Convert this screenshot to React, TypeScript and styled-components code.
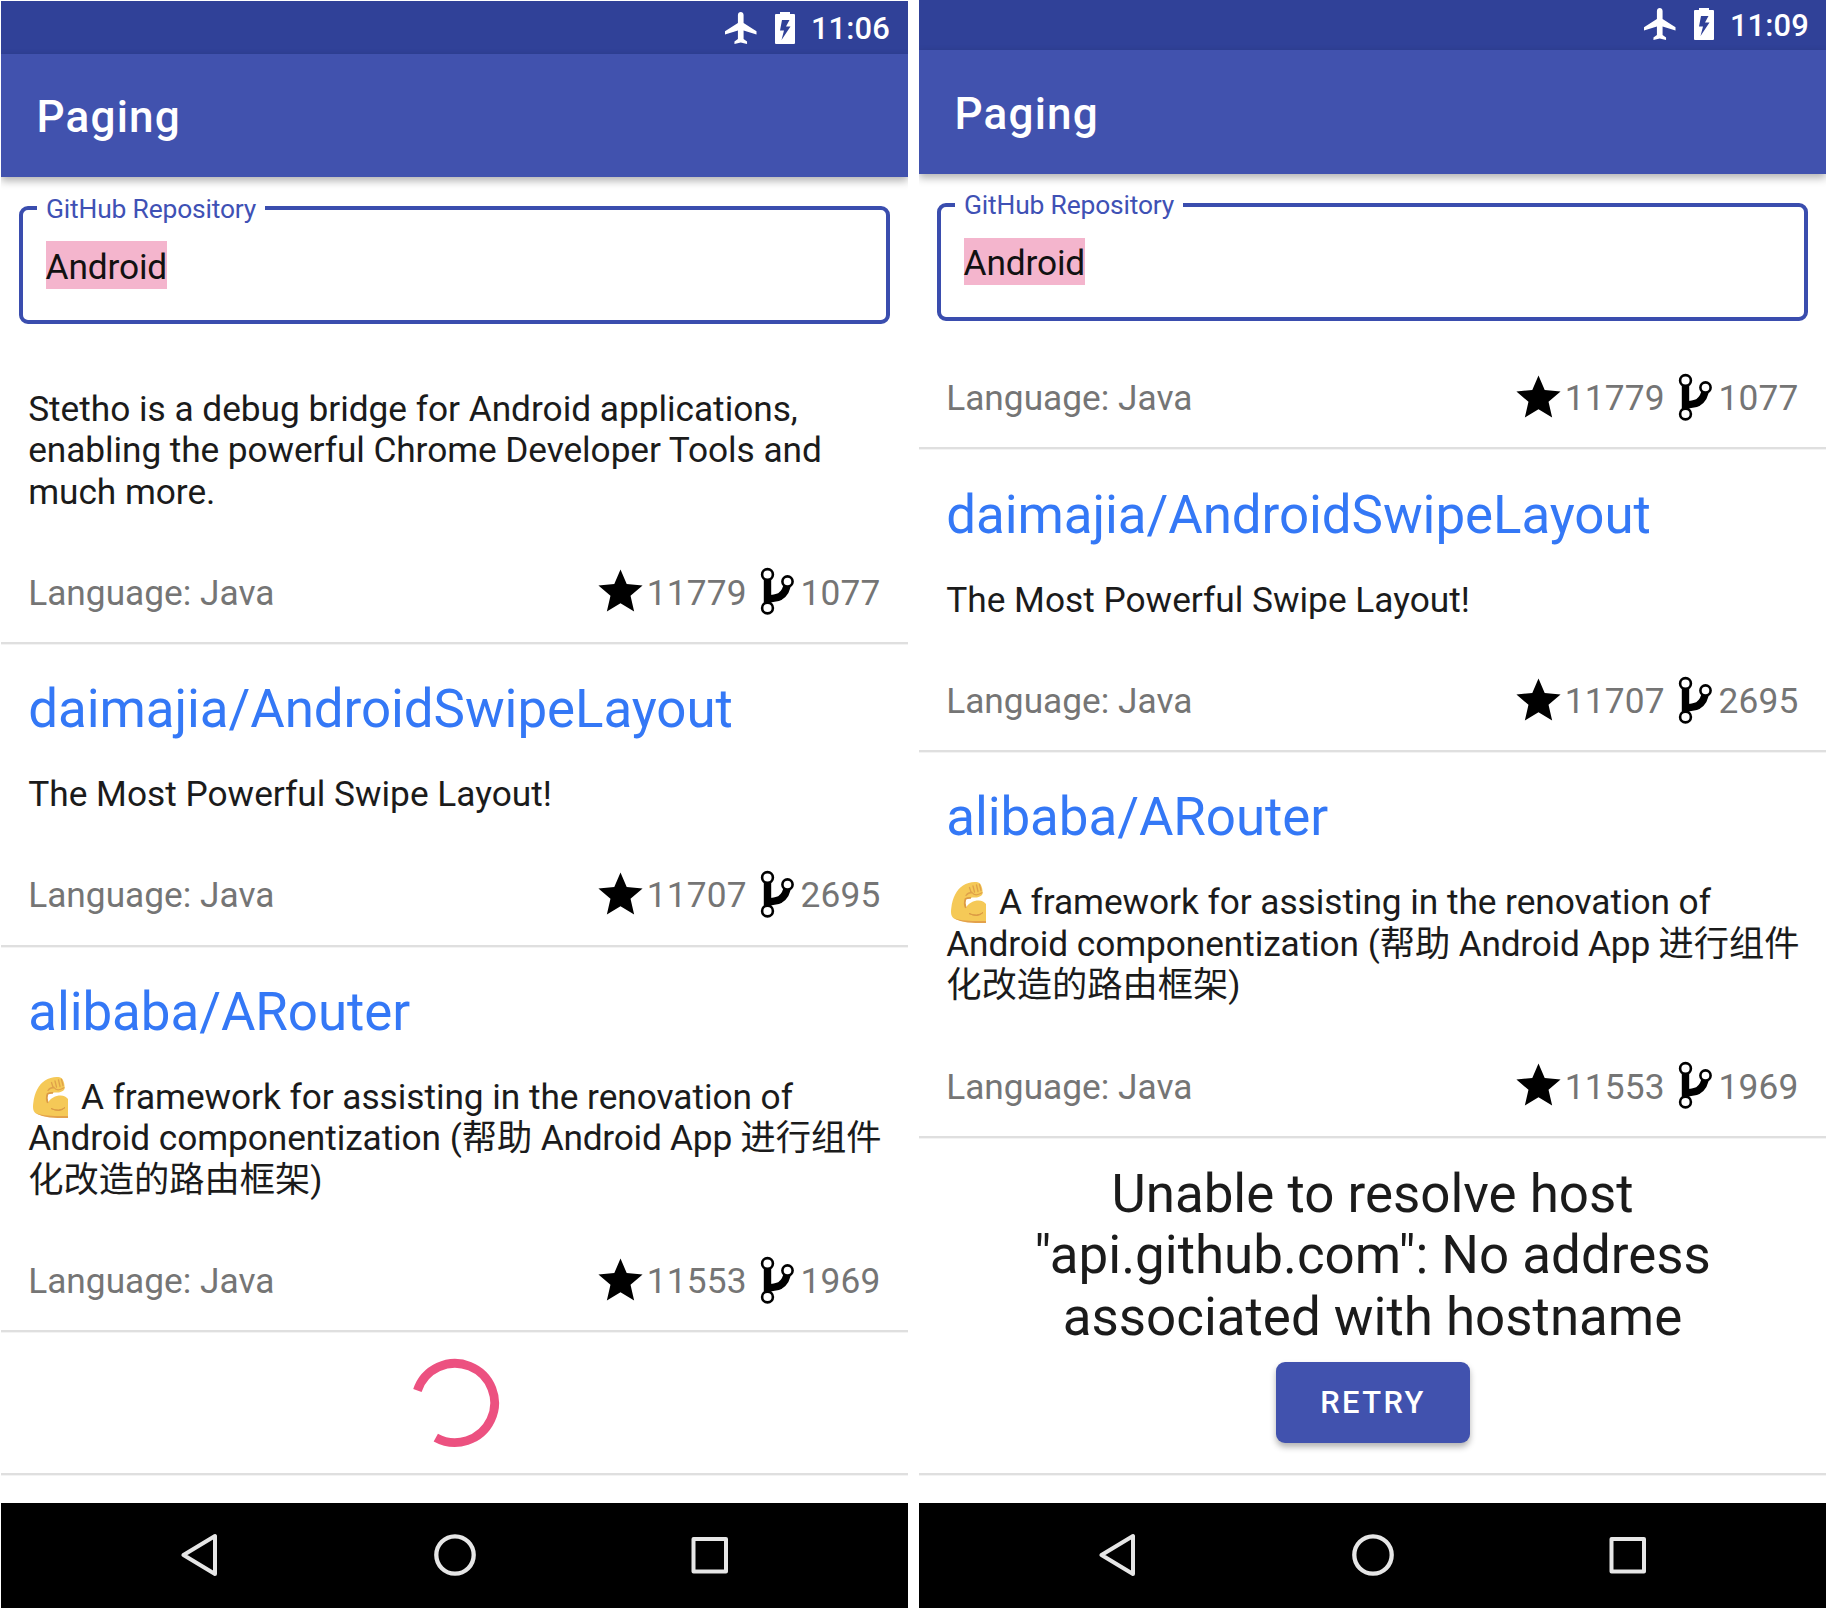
import React from "react";
import styled, { createGlobalStyle } from "styled-components";

const GlobalStyle = createGlobalStyle`
  *, *::before, *::after { box-sizing: border-box; }
  body {
    margin: 0;
    background: #fff;
    font-family: Roboto, "Noto Sans CJK SC", sans-serif;
    color: #1b1b1b;
  }
`;

const Stage = styled.main`
  display: flex;
  justify-content: space-between;
  align-items: flex-end;
  width: 1826px;
  height: 1608px;
  padding-left: 1px;
  overflow: hidden;
`;

const Phone = styled.section<{ $height: number }>`
  display: flex;
  flex-direction: column;
  width: 907px;
  height: ${(p) => p.$height}px;
  overflow: hidden;
  background: #fff;
`;

const StatusBar = styled.div<{ $height: number }>`
  flex: none;
  display: flex;
  align-items: center;
  justify-content: flex-end;
  height: ${(p) => p.$height}px;
  padding: ${(p) => (p.$height > 51 ? "1px 18px 0 0" : "0 17px 2px 0")};
  background: #304198;
  color: #fff;
`;

const Clock = styled.time`
  margin-left: 16px;
  padding-top: 3px;
  font-size: 30.9px;
  font-weight: 500;
  line-height: 36px;
  letter-spacing: 0.15px;
`;

const BatteryIcon = styled.svg`
  width: 20px;
  height: 32px;
  margin-left: 18px;
`;

const PlaneIcon = styled.svg`
  width: 31.5px;
  height: 32px;
`;

const AppBar = styled.header`
  flex: none;
  display: flex;
  align-items: center;
  height: 123.5px;
  padding: 4px 35px 0 35.4px;
  background: #4152ae;
  box-shadow: 0 4px 8px rgba(0, 0, 0, 0.3);
  z-index: 1;
`;

const AppTitle = styled.h1`
  margin: 0;
  color: #fff;
  font-size: 44.1px;
  font-weight: 500;
  line-height: 52px;
  letter-spacing: 1.2px;
`;

const SearchField = styled.fieldset`
  flex: none;
  height: 132.5px;
  margin: 14.5px 18px 0;
  padding: 0 0 0 14px;
  border: 4px solid #3a4dae;
  border-radius: 9px;
`;

const FieldLabel = styled.legend`
  padding: 2px 9px 0;
  color: #3f51b5;
  font-size: 26.4px;
  line-height: 31px;
  letter-spacing: -0.17px;
`;

const Selection = styled.span`
  display: block;
  width: max-content;
  height: 47.5px;
  margin: 16.5px 0 0 8.5px;
  padding-top: 3.5px;
  background: #f4b5cd;
  color: #111;
  font-size: 35.3px;
  line-height: 44px;
  letter-spacing: -0.15px;
`;

const List = styled.div`
  flex: 1;
  min-height: 0;
  display: flex;
  flex-direction: column;
  justify-content: flex-end;
  padding-bottom: 28px;
  overflow: hidden;
`;

const Item = styled.article`
  flex: none;
  padding: 34.4px 27.5px 27.8px 27.2px;
  border-bottom: 2.2px solid #dfdfdf;
  box-shadow: 0 1px 0 #f3f3f3;
`;

const RepoName = styled.h2`
  margin: 0 0 34px;
  color: #3478f6;
  font-size: 52.9px;
  font-weight: 400;
  line-height: 62px;
  letter-spacing: -0.07px;
`;

const Description = styled.p`
  margin: 0 0 59.6px;
  font-size: 35.28px;
  line-height: 41.5px;
  white-space: pre;
`;

const Tracked = styled.span<{ $tracking: number }>`
  letter-spacing: ${(p) => p.$tracking}px;
`;

const MetaRow = styled.div`
  display: flex;
  align-items: center;
  height: 41.4px;
  color: #757575;
  font-size: 35.28px;
  line-height: 41.4px;
`;

const Language = styled.span`
  flex: 1;
`;

const Count = styled.span`
  letter-spacing: 0.15px;
`;

const StarIcon = styled.svg`
  width: 53px;
  height: 53px;
  margin: -9px -0.5px -6px 0;
`;

const ForkIcon = styled.svg`
  width: 55px;
  height: 53px;
  margin: -9px -0.5px -6px -0.5px;
`;

const ArmIcon = styled.svg`
  display: inline-block;
  width: 44px;
  height: 44px;
  margin: -12px 0;
  vertical-align: 2px;
`;

const LoadingRow = styled.div`
  flex: none;
  display: flex;
  align-items: center;
  justify-content: center;
  height: 142.3px;
  padding-top: 1px;
  border-bottom: 2.2px solid #dfdfdf;
  box-shadow: 0 1px 0 #f3f3f3;
`;

const Spinner = styled.svg`
  width: 90px;
  height: 90px;
`;

const ErrorRow = styled.div`
  flex: none;
  display: flex;
  flex-direction: column;
  align-items: center;
  height: 336.8px;
  padding-top: 26px;
  border-bottom: 2.2px solid #dfdfdf;
  box-shadow: 0 1px 0 #f3f3f3;
`;

const ErrorText = styled.p`
  margin: 0;
  font-size: 52.9px;
  line-height: 61.5px;
  text-align: center;
  white-space: pre;
`;

const RetryButton = styled.button`
  width: 194px;
  height: 81px;
  margin-top: 13.6px;
  padding: 2px 0 0 1px;
  border: 0;
  border-radius: 9px;
  background: #4152ae;
  box-shadow: 0 4px 6px rgba(0, 0, 0, 0.3);
  color: #fff;
  font: 500 30.9px/36px Roboto, sans-serif;
  letter-spacing: 2.35px;
`;

const NavBar = styled.nav`
  flex: none;
  height: 105.5px;
  padding: 0 180px;
  display: flex;
  align-items: center;
  justify-content: space-between;
  background: #000;
`;

const NavIcon = styled.svg`
  width: 42px;
  height: 44px;
  fill: none;
  stroke: #e6e6e6;
  stroke-linejoin: round;
`;

const Star = () => (
  <StarIcon viewBox="0 0 24 24">
    <path d="M12 17.27 18.18 21l-1.64-7.03L22 9.24l-7.19-.61L12 2 9.19 8.63 2 9.24l5.46 4.73L5.82 21z" fill="#000" />
  </StarIcon>
);

const Fork = () => (
  <ForkIcon viewBox="0 0 55 53">
    <path d="M21.5 10V41M21.5 36C24 32 30 34 34 31.5C38.500 28.500 41 24 41.300 18" fill="none" stroke="#000" strokeWidth="7.4" />
    <g fill="#fff" stroke="#000" strokeWidth="2.6">
      <circle cx="21.500" cy="9.500" r="5.400" />
      <circle cx="21.500" cy="43" r="5.400" />
      <circle cx="41.500" cy="16.500" r="5.100" />
    </g>
  </ForkIcon>
);

const Arm = () => (
  <ArmIcon viewBox="0 0 44 44" role="img" aria-label="flexed biceps">
    <path d="M40 42C30 42.400 17 42.500 9 39C5 37 4.600 33 5.300 28C6.500 18 10.500 9.500 17 5.500C22 2.500 30 .5 34 3.500C36 6 37 11 36.500 14C35 17 30 18 26 17.500C24 19 21 18 19.500 19C18.800 21 19 25 19.800 28C23 21.500 32 19 37 21.500Q39 22.500 40 24Z" fill="#f5c957" />
    <path d="M19.800 28C18.500 25 18.700 21 19.400 19Q21.500 17.600 25 17.900" fill="none" stroke="#dc9b45" strokeWidth="1.700" />
    <path d="M20 15.500Q22 12.500 26 12.500Q29 17 36 12.800M23.500 7.500L25 12M27 6L28.500 12M30.500 5L32 11.500M33.500 4.500L35 10.500" fill="none" stroke="#dfa14a" strokeWidth="1.300" strokeLinecap="round" />
    <path d="M23 33.500Q31 37 37 32.500Q32 38 23 33.500Z" fill="#dc9b45" stroke="#dc9b45" strokeWidth="1" />
    <path d="M8 38.200C17 41.500 30 41 40 41V43C29 43 16 43.200 8 38.200Z" fill="#e3a14b" />
  </ArmIcon>
);

type Repo = {
  name?: string;
  description?: React.ReactNode;
  stars: number;
  forks: number;
};

const stetho: Repo = {
  description: (
    <>
      <Tracked $tracking={-0.03}>{"Stetho is a debug bridge for Android applications,\n"}</Tracked>
      <Tracked $tracking={-0.085}>{"enabling the powerful Chrome Developer Tools and\n"}</Tracked>
      <Tracked $tracking={-0.05}>much more.</Tracked>
    </>
  ),
  stars: 11779,
  forks: 1077,
};

const swipeLayout: Repo = {
  name: "daimajia/AndroidSwipeLayout",
  description: "The Most Powerful Swipe Layout!",
  stars: 11707,
  forks: 2695,
};

const aRouter: Repo = {
  name: "alibaba/ARouter",
  description: (
    <>
      <Arm />
      <Tracked $tracking={-0.055}>{" A framework for assisting in the renovation of\n"}</Tracked>
      <Tracked $tracking={-0.085}>Android componentization (</Tracked>
      {"帮助"}
      <Tracked $tracking={-0.24}>{" Android App "}</Tracked>
      {"进行组件\n化改造的路由框架)"}
    </>
  ),
  stars: 11553,
  forks: 1969,
};

const RepoItem = ({ name, description, stars, forks }: Repo) => (
  <Item>
    {name && <RepoName>{name}</RepoName>}
    {description && <Description>{description}</Description>}
    <MetaRow>
      <Language>Language: Java</Language>
      <Star />
      <Count>{stars}</Count>
      <Fork />
      <Count>{forks}</Count>
    </MetaRow>
  </Item>
);

type ScreenProps = {
  time: string;
  height: number;
  statusHeight: number;
  repos: Repo[];
  children: React.ReactNode;
};

const Screen = ({ time, height, statusHeight, repos, children }: ScreenProps) => (
  <Phone $height={height}>
    <StatusBar $height={statusHeight}>
      <PlaneIcon viewBox="2 2 20 20" preserveAspectRatio="none">
        <path d="M22 16v-2l-8.200-5.200V3.800c0-1-.8-1.800-1.800-1.800s-1.800.8-1.800 1.800V8.800L2 14v2l8.200-2.500V18.800L8 20.500V22l4-1 4 1v-1.500L13.800 18.800v-5.300z" fill="#fff" />
      </PlaneIcon>
      <BatteryIcon viewBox="0 0 20 32">
        <path fillRule="evenodd" d="M5 0H15V2H19Q20 2 20 3V31Q20 32 19 32H1Q0 32 0 31V3Q0 2 1 2H5ZM7 8L5 18.500H9L6.500 28L15.500 14.500H11L14.500 8Z" fill="#fff" />
      </BatteryIcon>
      <Clock>{time}</Clock>
    </StatusBar>
    <AppBar>
      <AppTitle>Paging</AppTitle>
    </AppBar>
    <SearchField>
      <FieldLabel>GitHub Repository</FieldLabel>
      <Selection>Android</Selection>
    </SearchField>
    <List>
      {repos.map((repo) => (
        <RepoItem key={repo.stars} {...repo} />
      ))}
      {children}
    </List>
    <NavBar>
      <NavIcon viewBox="0 0 42 44" strokeWidth="4">
        <path d="M34 3V41L2.500 22Z" />
      </NavIcon>
      <NavIcon viewBox="0 0 42 44" strokeWidth="4.300">
        <circle cx="21" cy="22" r="18.700" />
      </NavIcon>
      <NavIcon viewBox="0 0 42 44" strokeWidth="4">
        <rect x="7.500" y="6" width="32.500" height="32.500" />
      </NavIcon>
    </NavBar>
  </Phone>
);

export default function App() {
  return (
    <>
      <GlobalStyle />
      <Stage>
        <Screen
          time="11:06"
          height={1607}
          statusHeight={52.5}
          repos={[stetho, swipeLayout, aRouter]}
        >
          <LoadingRow>
            <Spinner viewBox="-45 -45 90 90">
              <path d="M-37.600 -12.500A39.600 39.600 0 1 1 -19.200 34.600" fill="none" stroke="#ec5180" strokeWidth="8.800" />
            </Spinner>
          </LoadingRow>
        </Screen>
        <Screen
          time="11:09"
          height={1608}
          statusHeight={50}
          repos={[{ stars: 11779, forks: 1077 }, swipeLayout, aRouter]}
        >
          <ErrorRow>
            <ErrorText>{'Unable to resolve host\n"api.github.com": No address\nassociated with hostname'}</ErrorText>
            <RetryButton>RETRY</RetryButton>
          </ErrorRow>
        </Screen>
      </Stage>
    </>
  );
}
